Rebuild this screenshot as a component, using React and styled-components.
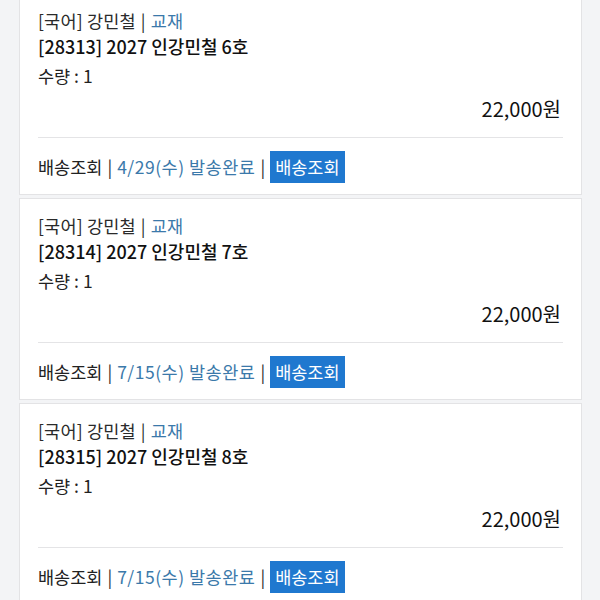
import styled, { createGlobalStyle } from "styled-components";

const GlobalStyle = createGlobalStyle`
  html, body {
    margin: 0;
    padding: 0;
    background: #f3f4f6;
    font-family: "Noto Sans CJK KR", "Noto Sans", sans-serif;
    color: #1f1f1f;
    overflow: hidden;
  }
`;

const List = styled.div`
  display: flex;
  flex-direction: column;
  gap: 3px;
  margin-top: -7px;
  padding: 0 18px 0 19px;
`;

const Card = styled.div`
  background: #fff;
  border: 1px solid #e3e3e5;
  padding: 15px 18px 11px 18px;
  display: flex;
  flex-direction: column;
`;

const Meta = styled.div`
  font-size: 17.5px;
  line-height: 24px;
  color: #2a2a2a;
  letter-spacing: 0.2px;
`;

const Blue = styled.span`
  color: #3b79aa;
  letter-spacing: ${(p) => (p.$wide ? "0.5px" : "0")};
`;

const Sep = styled.span`
  margin: 0 ${(p) => p.$gap || 6}px;
  color: #2a2a2a;
`;

const Title = styled.div`
  font-size: 18px;
  font-weight: 500;
  line-height: 26px;
  color: #111;
`;

const Qty = styled.div`
  margin-top: 5px;
  font-size: 17.5px;
  line-height: 24px;
  color: #222;
`;

const Price = styled.div`
  margin-top: 8px;
  text-align: right;
  font-size: 20px;
  line-height: 26px;
  color: #111;
  padding-right: 2px;
`;

const Divider = styled.hr`
  margin: 15px 0 13px 0;
  border: none;
  border-top: 1px solid #e4e4e6;
`;

const Footer = styled.div`
  display: flex;
  align-items: center;
  font-size: 17.5px;
  line-height: 32px;
  color: #222;
  white-space: pre;
`;

const TrackButton = styled.span`
  display: inline-block;
  height: 32px;
  padding: 0 5px;
  background: #1f78cf;
  color: #fff;
  font-size: 17.5px;
  line-height: 32px;
`;

const orders = [
  { code: "28313", vol: "6호", date: "4/29(수)" },
  { code: "28314", vol: "7호", date: "7/15(수)" },
  { code: "28315", vol: "8호", date: "7/15(수)" },
];

function OrderCard({ code, vol, date }) {
  return (
    <Card>
      <Meta>
        [국어] 강민철<Sep $gap={5}>|</Sep><Blue>교재</Blue>
      </Meta>
      <Title>
        [{code}] 2027 인강민철 {vol}
      </Title>
      <Qty>수량 : 1</Qty>
      <Price>22,000원</Price>
      <Divider />
      <Footer>
        배송조회<Sep $gap={5}>|</Sep>
        <Blue $wide>{date} 발송완료</Blue>
        <Sep $gap={5}>|</Sep>
        <TrackButton>배송조회</TrackButton>
      </Footer>
    </Card>
  );
}

export default function App() {
  return (
    <>
      <GlobalStyle />
      <List>
        {orders.map((o) => (
          <OrderCard key={o.code} {...o} />
        ))}
      </List>
    </>
  );
}
